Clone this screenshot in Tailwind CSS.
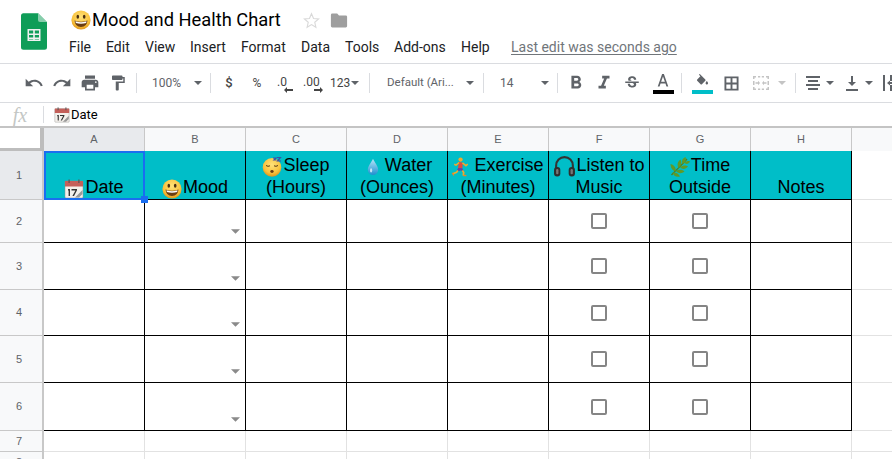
<!DOCTYPE html>
<html><head><meta charset="utf-8"><script src="https://cdn.jsdelivr.net/npm/@tailwindcss/browser@4"></script></head>
<body class="bg-white overflow-hidden">
<svg width="0" height="0" class="absolute">
<defs>
<radialGradient id="face" cx="50%" cy="35%" r="70%"><stop offset="0" stop-color="#ffe27a"/><stop offset="0.65" stop-color="#f9c23c"/><stop offset="1" stop-color="#d98a14"/></radialGradient>
<linearGradient id="drop" x1="0" y1="0" x2="0" y2="1"><stop offset="0" stop-color="#b8e6f8"/><stop offset="1" stop-color="#1f8fd0"/></linearGradient>
<symbol id="smile" viewBox="0 0 20 20"><circle cx="10" cy="10" r="9.6" fill="url(#face)"/><ellipse cx="6.8" cy="6.8" rx="1.3" ry="2" fill="#4a2f10"/><ellipse cx="13.2" cy="6.8" rx="1.3" ry="2" fill="#4a2f10"/><path d="M3.5 10.5Q10 13 16.5 10.5Q16 17 10 17Q4 17 3.5 10.5Z" fill="#6b3d12"/><path d="M4.5 11.2Q10 13.2 15.5 11.2L15.2 13Q10 14.6 4.8 13Z" fill="#fff"/></symbol>
<symbol id="cal" viewBox="0 0 20 20"><rect x="1" y="2" width="18" height="17" rx="1" fill="#f4f1ec" stroke="#8d8d8d" stroke-width=".5"/><rect x="1" y="2" width="18" height="5.5" fill="#c4605a"/><rect x="4.5" y="0.5" width="1.2" height="3.5" fill="#555"/><rect x="14.3" y="0.5" width="1.2" height="3.5" fill="#555"/><path d="M4 10h2v7H4.600v-5.400H4zM7.500 10H13v1.200L10 17H8.400l3-5.600H7.500z" fill="#333"/><path d="M11 18.500L18.500 11v4l-3.500 3.500z" fill="#9a9a9a"/></symbol>
<symbol id="sleep" viewBox="0 0 20 20"><circle cx="10" cy="10.400" r="9.300" fill="url(#face)"/><path d="M4 8.500q2 1.500 4 .3M12 8.800q2 1.200 4-.3" fill="none" stroke="#5a3a10" stroke-width="1"/><ellipse cx="10" cy="14.500" rx="1.700" ry="1.400" fill="#6b3d12"/><path d="M11 1h3l-2 2h2.500M15 .5h3.500l-3 3.500h3.500" fill="none" stroke="#3b4fa8" stroke-width="1.200"/></symbol>
<symbol id="water" viewBox="0 0 14 20"><path d="M7 .5C9 5 13 9 13 13.200A6 6 0 0 1 1 13.200C1 9 5 5 7 .5Z" fill="url(#drop)"/><ellipse cx="4.800" cy="14" rx="1.300" ry="2.500" fill="#e3f6fd" opacity=".8"/></symbol>
<symbol id="run" viewBox="0 0 20 22"><circle cx="9.500" cy="2.800" r="2.400" fill="#f0a92e"/><path d="M7.500 5.300L12 6.300 11.500 12.500 6.800 12.200Z" fill="#e0473f"/><path d="M11.600 6.500L15.500 9.500 17.500 7.800" fill="none" stroke="#f0a92e" stroke-width="1.700"/><path d="M8 6L4.500 9 2.500 8" fill="none" stroke="#f0a92e" stroke-width="1.700"/><path d="M6.800 12L11.600 12.500 12.500 15.500 9.500 15 8 15.500 5.500 15Z" fill="#6a3fa0"/><path d="M6.500 15L5 17 1 18.500" fill="none" stroke="#f0a92e" stroke-width="1.900"/><path d="M11.500 15L13 17 12.500 20.500" fill="none" stroke="#f0a92e" stroke-width="1.900"/><path d="M12.500 20.500h3.500" stroke="#e6862a" stroke-width="1.500"/><path d="M.5 17.500l1.500 3" stroke="#e6862a" stroke-width="1.500"/></symbol>
<symbol id="phones" viewBox="0 0 22 22"><path d="M3 13V10a8 8 0 0 1 16 0v3" fill="none" stroke="#333" stroke-width="2"/><rect x="1" y="11.500" width="6" height="9" rx="2.800" fill="#2f2f2f"/><rect x="15" y="11.500" width="6" height="9" rx="2.800" fill="#2f2f2f"/><rect x="3" y="13.500" width="2.200" height="5" rx="1" fill="#777"/><rect x="16.800" y="13.500" width="2.200" height="5" rx="1" fill="#777"/></symbol>
<symbol id="herb" viewBox="0 0 20 20"><path d="M1.500 18C6 13 11 9 17 2" fill="none" stroke="#4f7d1e" stroke-width="1.300"/><path d="M12.500 7C11 3.500 13 1 15.500 0 16.500 3 15.500 6 12.500 7ZM14.500 6C16.500 3.800 19 3.800 20 4.500 19 7 16.500 7.800 14.500 6ZM8.500 11C6.500 7.500 8 4 10.500 2.500 12 5.500 11.500 9 8.500 11ZM10 10.500C12.500 8 16.500 8 18 9.500 15.500 12.500 12.500 12.500 10 10.500ZM5.500 14.500C2 13.500.5 10 .5 7 4.500 8 6.500 11 5.500 14.500ZM6 14C8.500 12 13 12.500 14.500 14.500 11.500 17 8 16.500 6 14ZM2.500 15.500C6 15 8.500 16.500 10 19.500 6.500 20.500 3.500 19 2.500 15.500Z" fill="#5f9a28"/></symbol>
<symbol id="arrow" viewBox="0 0 10 5"><path d="M0 0h10L5 5z"/></symbol>
</defs></svg>

<div class="w-[892px] h-[459px] overflow-hidden flex flex-col font-['Roboto',sans-serif]">
  <!-- title bar -->
  <header class="h-[63px] flex shrink-0 relative">
    <div class="w-[70px] pl-[21px] pt-[13px] shrink-0">
      <svg width="26" height="37" viewBox="0 0 26 37"><path d="M2 0H17L26 9V34A2.500 2.500 0 0 1 23.500 36.500H2.500A2.500 2.500 0 0 1 0 34V2.500A2.500 2.500 0 0 1 2 0Z" fill="#0f9d58" transform="translate(0 .2)"/><path d="M17 0L26 9H19A2 2 0 0 1 17 7Z" fill="#87ceac"/><path d="M6.500 16H19.500V28H6.500ZM8 17.500V20.500H12.200V17.500ZM13.800 17.500V20.500H18V17.500ZM8 22V24.500H12.200V22ZM13.800 22V24.500H18V22ZM8 26V26.500H12.200V26ZM13.800 26V26.500H18V26Z" fill="#f1f1f1" fill-rule="evenodd"/></svg>
    </div>
    <div class="flex flex-col">
      <div class="flex items-center h-[24px] mt-[8px] text-[18.3px] text-black leading-none">
        <svg class="w-[20px] h-[20px] ml-[1px] mr-[1px]"><use href="#smile"/></svg>
        <span class="w-[190px] whitespace-nowrap">Mood and Health Chart</span>
        <svg class="ml-[21px] mt-[1px]" width="17" height="17" viewBox="0 0 24 24"><path d="M12 2.500l2.900 6.600 7.100.700-5.400 4.700 1.600 7-6.200-3.700-6.200 3.700 1.600-7L2 9.800l7.100-.700z" fill="none" stroke="#d9d9d9" stroke-width="1.600"/></svg>
        <svg class="ml-[10px] mt-[1px]" width="18" height="15" viewBox="0 0 18 15"><path d="M0 2A1.500 1.500 0 0 1 1.500 .5H7L9 2.500H16.500A1.500 1.500 0 0 1 18 4V13.500A1.500 1.500 0 0 1 16.500 15H1.500A1.500 1.500 0 0 1 0 13.500Z" fill="#9e9e9e" transform="scale(.9 .96) translate(1 0)"/></svg>
      </div>
      <nav class="flex items-center h-[24px] mt-[3px] text-[14px] text-[#202124] whitespace-nowrap">
        <span class="ml-[-1px] w-[37px]">File</span><span class="w-[39px]">Edit</span><span class="w-[45px]">View</span><span class="w-[51px]">Insert</span><span class="w-[60px]">Format</span><span class="w-[44px]">Data</span><span class="w-[49px]">Tools</span><span class="w-[67px]">Add-ons</span><span class="w-[50px]">Help</span>
        <span class="text-[#70757a] underline underline-offset-2">Last edit was seconds ago</span>
      </nav>
    </div>
  </header>

  <!-- toolbar -->
  <div class="h-[40px] shrink-0 border-y border-[#dadce0] flex items-center pl-[20px] text-[12px] text-[#5f6368] whitespace-nowrap overflow-hidden [&>*]:shrink-0">
    <span class="w-[28px] flex justify-center"><svg width="20" height="20" viewBox="0 0 24 24" fill="#5f6368"><path d="M12.500 8c-2.650 0-5.050.990-6.900 2.600L2 7v9h9l-3.620-3.620c1.390-1.160 3.160-1.880 5.120-1.880 3.540 0 6.550 2.310 7.600 5.500l2.370-.780C21.080 11.030 17.150 8 12.500 8z"/></svg></span>
    <span class="w-[28px] flex justify-center"><svg width="20" height="20" viewBox="0 0 24 24" fill="#5f6368"><path d="M18.400 10.600C16.550 8.990 14.150 8 11.500 8c-4.650 0-8.580 3.030-9.960 7.220L3.900 16c1.050-3.190 4.050-5.500 7.600-5.500 1.950 0 3.730.720 5.120 1.880L13 16h9V7l-3.600 3.600z"/></svg></span>
    <span class="w-[28px] flex justify-center"><svg width="20" height="20" viewBox="0 0 24 24" fill="#5f6368"><path d="M19 8H5c-1.660 0-3 1.340-3 3v6h4v4h12v-4h4v-6c0-1.660-1.340-3-3-3zm-3 11H8v-5h8v5zm3-7c-.550 0-1-.450-1-1s.450-1 1-1 1 .450 1 1-.450 1-1 1zm-1-9H6v4h12V3z"/></svg></span>
    <span class="w-[28px] flex justify-center"><svg width="18" height="18" viewBox="0 0 24 24" fill="#5f6368"><path d="M18 4V3c0-.550-.450-1-1-1H5c-.550 0-1 .450-1 1v4c0 .550.450 1 1 1h12c.550 0 1-.450 1-1V6h1v4H9v11c0 .550.450 1 1 1h2c.550 0 1-.450 1-1v-9h8V4h-3z"/></svg></span>
    <i class="block w-px h-[20px] bg-[#dadce0] ml-[4px]"></i>
    <span class="w-[73px] flex items-center"><span class="ml-[15px] w-[42px]">100%</span><svg class="w-[8px] h-[4px] fill-[#5f6368]"><use href="#arrow"/></svg></span>
    <i class="block w-px h-[20px] bg-[#dadce0]"></i>
    <span class="w-[28px] ml-[4px] text-center font-medium text-[13px] text-[#444] pb-[1px]">$</span>
    <span class="w-[28px] text-center text-[#444] pb-[1px]">%</span>
    <span class="w-[28px] relative pl-[6px] text-[#444] pb-[3px]">.0<svg class="absolute left-[13px] top-[14px]" width="9" height="6" viewBox="0 0 9 6" fill="#444"><path d="M3 0L0 3l3 3V4h6V2H3z"/></svg></span>
    <span class="w-[28px] relative pl-[4px] text-[#444] pb-[3px]">.00<svg class="absolute left-[15px] top-[14px]" width="9" height="6" viewBox="0 0 9 6" fill="#444"><path d="M6 0l3 3-3 3V4H0V2h6z"/></svg></span>
    <span class="w-[42px] flex items-center text-[#444]"><span class="ml-[3px]">123</span><svg class="ml-[1px] w-[8px] h-[4px] fill-[#5f6368]"><use href="#arrow"/></svg></span>
    <i class="block w-px h-[20px] bg-[#dadce0]"></i>
    <span class="w-[113px] flex items-center"><span class="ml-[17px] w-[79px] text-[11.500px]">Default (Ari...</span><svg class="w-[8px] h-[4px] fill-[#5f6368]"><use href="#arrow"/></svg></span>
    <i class="block w-px h-[20px] bg-[#dadce0]"></i>
    <span class="w-[73px] flex items-center"><span class="ml-[16px] w-[41px]">14</span><svg class="w-[8px] h-[4px] fill-[#5f6368]"><use href="#arrow"/></svg></span>
    <i class="block w-px h-[20px] bg-[#dadce0]"></i>
    <span class="w-[28px] ml-[4px] flex justify-center"><svg width="22" height="22" viewBox="0 0 24 24" fill="#5f6368"><path d="M15.600 10.790c.970-.670 1.650-1.770 1.650-2.790 0-2.260-1.750-4-4-4H7v14h7.040c2.090 0 3.710-1.700 3.710-3.790 0-1.520-.860-2.820-2.150-3.420zM10 6.500h3c.830 0 1.500.670 1.500 1.500s-.670 1.500-1.500 1.500h-3v-3zm3.500 9H10v-3h3.500c.830 0 1.500.670 1.500 1.500s-.670 1.500-1.500 1.500z"/></svg></span>
    <span class="w-[28px] flex justify-center"><svg width="22" height="22" viewBox="0 0 24 24" fill="#5f6368"><path d="M10 4v3h2.210l-3.420 8H6v3h8v-3h-2.210l3.420-8H18V4z"/></svg></span>
    <span class="w-[28px] flex justify-center"><svg width="18" height="18" viewBox="0 0 24 24" fill="#5f6368"><path d="M7.240 8.750c-.260-.480-.390-1.030-.390-1.670 0-.610.130-1.160.400-1.670.260-.500.630-.930 1.110-1.290.480-.350 1.050-.630 1.700-.830.660-.190 1.390-.290 2.180-.290.810 0 1.540.110 2.210.340.660.220 1.230.540 1.690.940.470.400.830.880 1.080 1.430.250.550.380 1.150.380 1.810h-3.010c0-.310-.050-.590-.150-.850-.090-.270-.240-.490-.440-.680-.200-.190-.450-.330-.750-.440-.300-.100-.660-.160-1.060-.160-.390 0-.740.040-1.030.130-.290.090-.530.210-.720.360-.190.160-.340.340-.440.550-.100.210-.150.430-.150.660 0 .480.250.880.740 1.210.380.250.770.480 1.410.700H7.390c-.050-.080-.110-.170-.150-.250zM21 12v-2H3v2h9.620c.180.070.400.140.550.200.370.170.660.340.870.510.210.170.350.360.430.570.070.200.110.430.110.690 0 .230-.050.450-.140.660-.090.200-.230.380-.420.530-.190.150-.420.260-.710.350-.290.080-.630.130-1.010.130-.430 0-.830-.040-1.180-.130s-.660-.230-.910-.420c-.250-.190-.450-.440-.590-.750-.140-.310-.250-.760-.250-1.210H6.400c0 .550.080 1.130.240 1.580.160.450.370.850.650 1.210.280.350.600.660.980.920.370.260.780.480 1.220.650.440.170.900.300 1.380.390.480.080.960.130 1.440.130.800 0 1.530-.090 2.180-.280s1.210-.450 1.670-.790c.460-.340.820-.770 1.070-1.270s.380-1.070.38-1.710c0-.600-.100-1.140-.310-1.610-.050-.110-.110-.230-.170-.330H21z"/></svg></span>
    <span class="w-[30px] flex flex-col items-center ml-[2px] pt-[1px]"><svg width="12" height="13" viewBox="0 0 16 15" fill="#5f6368" preserveAspectRatio="none"><path d="M6.800 0h2.400L15 14.500h-2.400l-1.300-3.500H4.700L3.400 14.500H1zM5.500 9h5L8 2.800z"/></svg><i class="block w-[21px] h-[4px] bg-black mt-[3px]"></i></span>
    <i class="block w-px h-[20px] bg-[#dadce0] ml-[3px]"></i>
    <span class="w-[28px] ml-[6px] flex flex-col items-center pt-[1px]"><svg width="15" height="13" viewBox="0 0 24 21" fill="#5f6368"><path d="M16.560 8.940L7.620 0 6.210 1.410l2.380 2.380-5.150 5.150c-.590.590-.590 1.540 0 2.120l5.500 5.500c.290.290.680.440 1.060.440s.770-.150 1.060-.440l5.500-5.500c.590-.580.590-1.530 0-2.120zM19 11.500s-2 2.170-2 3.500c0 1.100.900 2 2 2s2-.900 2-2c0-1.330-2-3.500-2-3.500z"/></svg><i class="block w-[21px] h-[4px] bg-[#00bec8] mt-[3px]"></i></span>
    <span class="w-[30px] flex justify-center"><svg width="15" height="15" viewBox="0 0 16 16" fill="none" stroke="#5f6368" stroke-width="2"><path d="M1.500 1.500h13v13h-13zM8 1.500v13M1.500 8h13"/></svg></span>
    <span class="w-[30px] flex justify-center"><svg width="16" height="14" viewBox="0 0 16 14" fill="#c4c4c4"><path d="M0 0h3v1.500H1.500V3H0zM5 0h2.200v1.500H5zM8.800 0H11v1.500H8.800zM13 0h3v3h-1.500V1.500H13zM0 11h1.500v1.500H3V14H0zM5 12.500h2.200V14H5zM8.800 12.500H11V14H8.800zM14.500 11H16v3h-3v-1.500h1.500zM0 5h1.500v4H0zM14.500 5H16v4h-1.500zM2.500 6.300h2.500V4.800L7 7 5 9.200V7.700H2.500zM13.500 6.300H11V4.800L9 7l2 2.200V7.700h2.500z"/></svg></span>
    <svg class="w-[8px] h-[4px] fill-[#c4c4c4] ml-[2px]"><use href="#arrow"/></svg>
    <i class="block w-px h-[20px] bg-[#dadce0] ml-[9px]"></i>
    <span class="w-[28px] ml-[3px] flex justify-center"><svg width="14" height="14" viewBox="0 0 14 14" fill="#5f6368"><path d="M0 0h14v2H0zM2 4h10v2H2zM0 8h14v2H0zM2 12h10v2H2z"/></svg></span>
    <svg class="w-[8px] h-[4px] fill-[#5f6368] -ml-[1px]"><use href="#arrow"/></svg>
    <span class="w-[28px] ml-[4px] flex justify-center"><svg width="14" height="15" viewBox="0 0 14 15" fill="#5f6368"><path d="M6 0h2v6h3l-4 4-4-4h3zM1 13h12v2H1z"/></svg></span>
    <svg class="w-[8px] h-[4px] fill-[#5f6368] -ml-[1px]"><use href="#arrow"/></svg>
    <span class="ml-[10px] flex"><svg width="14" height="16" viewBox="0 0 14 16" fill="#5f6368"><path d="M0 0h2v16H0zM7 0h2v6H7zM7 10h2v6H7zM4 8l3-2.500V7h7v2H7v1.500z"/></svg></span>
  </div>

  <!-- formula bar -->
  <div class="h-[23px] shrink-0 flex items-center">
    <span class="w-[43px] text-center font-['Liberation_Serif',serif] italic text-[20px] text-[#c4c7c5] leading-none pr-[3px]">fx</span>
    <i class="block w-px h-[17px] bg-[#dadce0]"></i>
    <svg class="w-[16px] h-[16px] ml-[10px]"><use href="#cal"/></svg>
    <span class="ml-[1px] text-[13px] text-black">Date</span>
  </div>

  <!-- sheet -->
  <div class="flex flex-col grow border-t-2 border-[#c4c4c4] text-[11px] text-[#5f6368] relative font-['Liberation_Sans',sans-serif]">
    <!-- column letters -->
    <div class="flex h-[23px] shrink-0">
      <div class="w-[44px] border-r-4 border-b-[3px] border-[#bdbdbd] bg-white"></div>
      <div class="w-[101px] bg-[#e8eaed] border-r border-[#c8c8c8] flex items-center justify-center">A</div>
      <div class="w-[101px] bg-[#f8f9fa] border-r border-[#c8c8c8] flex items-center justify-center">B</div>
      <div class="w-[101px] bg-[#f8f9fa] border-r border-[#c8c8c8] flex items-center justify-center">C</div>
      <div class="w-[101px] bg-[#f8f9fa] border-r border-[#c8c8c8] flex items-center justify-center">D</div>
      <div class="w-[101px] bg-[#f8f9fa] border-r border-[#c8c8c8] flex items-center justify-center">E</div>
      <div class="w-[101px] bg-[#f8f9fa] border-r border-[#c8c8c8] flex items-center justify-center">F</div>
      <div class="w-[101px] bg-[#f8f9fa] border-r border-[#c8c8c8] flex items-center justify-center">G</div>
      <div class="w-[101px] bg-[#f8f9fa] border-r border-[#c8c8c8] flex items-center justify-center">H</div>
      <div class="grow bg-[#f8f9fa]"></div>
    </div>
    <!-- row 1 -->
    <div class="flex h-[49px] shrink-0 text-[18px] leading-[22px] text-black">
      <div class="w-[44px] shrink-0 bg-[#e8eaed] border-r-2 border-b border-[#c8c8c8] flex items-center justify-center text-[11px] text-[#5f6368] pr-[4px]">1</div>
      <div class="w-[101px] shrink-0 bg-[#00bec8] border-r border-b border-black text-center flex flex-col justify-end pb-[1px]"><div class="whitespace-nowrap"><svg class="inline-block w-[20px] h-[20px] mb-[-2px] mr-[1px]"><use href="#cal"/></svg>Date</div></div>
      <div class="w-[101px] shrink-0 bg-[#00bec8] border-r border-b border-black text-center flex flex-col justify-end pb-[1px]"><div class="whitespace-nowrap"><svg class="inline-block w-[20px] h-[20px] mb-[-2px] mr-[1px]"><use href="#smile"/></svg>Mood</div></div>
      <div class="w-[101px] shrink-0 bg-[#00bec8] border-r border-b border-black text-center flex flex-col justify-end pb-[1px]"><div class="whitespace-nowrap"><svg class="inline-block w-[20px] h-[20px] mb-[-2px] mr-[1px]"><use href="#sleep"/></svg>Sleep</div><div>(Hours)</div></div>
      <div class="w-[101px] shrink-0 bg-[#00bec8] border-r border-b border-black text-center flex flex-col justify-end pb-[1px]"><div class="whitespace-nowrap"><svg class="inline-block w-[12px] h-[18px] mb-[-1px] ml-[5px] mr-[6px]"><use href="#water"/></svg>Water</div><div>(Ounces)</div></div>
      <div class="w-[101px] shrink-0 bg-[#00bec8] border-r border-b border-black text-center flex flex-col justify-end pb-[1px]"><div class="whitespace-nowrap"><svg class="inline-block w-[18px] h-[20px] mb-[-1px] mr-[4px]"><use href="#run"/></svg>Exercise</div><div>(Minutes)</div></div>
      <div class="w-[101px] shrink-0 bg-[#00bec8] border-r border-b border-black text-center flex flex-col justify-end pb-[1px]"><div class="whitespace-nowrap"><svg class="inline-block w-[23px] h-[23px] mb-[-7px] -translate-y-[3px]"><use href="#phones"/></svg>Listen to</div><div>Music</div></div>
      <div class="w-[101px] shrink-0 bg-[#00bec8] border-r border-b border-black text-center flex flex-col justify-end pb-[1px]"><div class="whitespace-nowrap"><svg class="inline-block w-[20px] h-[20px] mb-[-2px] mr-[1px]"><use href="#herb"/></svg>Time</div><div>Outside</div></div>
      <div class="w-[101px] shrink-0 bg-[#00bec8] border-r border-b border-black text-center flex flex-col justify-end pb-[1px]"><div>Notes</div></div>
      <div class="grow border-b border-[#e2e2e2]"></div>
    </div>
    <!-- row 2 -->
    <div class="flex h-[43px] shrink-0">
      <div class="w-[44px] shrink-0 bg-[#f8f9fa] border-r-2 border-b border-[#c8c8c8] flex items-center justify-center pr-[4px]">2</div>
      <div class="w-[101px] shrink-0 border-r border-b border-black"></div>
      <div class="w-[101px] shrink-0 border-r border-b border-black flex items-end justify-end pr-[5px] pb-[8px]"><svg class="w-[9px] h-[5px] fill-[#8a8a8a]"><use href="#arrow"/></svg></div>
      <div class="w-[101px] shrink-0 border-r border-b border-black"></div>
      <div class="w-[101px] shrink-0 border-r border-b border-black"></div>
      <div class="w-[101px] shrink-0 border-r border-b border-black"></div>
      <div class="w-[101px] shrink-0 border-r border-b border-black flex items-center justify-center"><i class="block size-[16px] border-2 border-[#858585] rounded-[2px]"></i></div>
      <div class="w-[101px] shrink-0 border-r border-b border-black flex items-center justify-center"><i class="block size-[16px] border-2 border-[#858585] rounded-[2px]"></i></div>
      <div class="w-[101px] shrink-0 border-r border-b border-black"></div>
      <div class="grow border-b border-[#e2e2e2]"></div>
    </div>
    <!-- row 3 -->
    <div class="flex h-[47px] shrink-0">
      <div class="w-[44px] shrink-0 bg-[#f8f9fa] border-r-2 border-b border-[#c8c8c8] flex items-center justify-center pr-[4px]">3</div>
      <div class="w-[101px] shrink-0 border-r border-b border-black"></div>
      <div class="w-[101px] shrink-0 border-r border-b border-black flex items-end justify-end pr-[5px] pb-[8px]"><svg class="w-[9px] h-[5px] fill-[#8a8a8a]"><use href="#arrow"/></svg></div>
      <div class="w-[101px] shrink-0 border-r border-b border-black"></div>
      <div class="w-[101px] shrink-0 border-r border-b border-black"></div>
      <div class="w-[101px] shrink-0 border-r border-b border-black"></div>
      <div class="w-[101px] shrink-0 border-r border-b border-black flex items-center justify-center"><i class="block size-[16px] border-2 border-[#858585] rounded-[2px]"></i></div>
      <div class="w-[101px] shrink-0 border-r border-b border-black flex items-center justify-center"><i class="block size-[16px] border-2 border-[#858585] rounded-[2px]"></i></div>
      <div class="w-[101px] shrink-0 border-r border-b border-black"></div>
      <div class="grow border-b border-[#e2e2e2]"></div>
    </div>
    <!-- row 4 -->
    <div class="flex h-[46px] shrink-0">
      <div class="w-[44px] shrink-0 bg-[#f8f9fa] border-r-2 border-b border-[#c8c8c8] flex items-center justify-center pr-[4px]">4</div>
      <div class="w-[101px] shrink-0 border-r border-b border-black"></div>
      <div class="w-[101px] shrink-0 border-r border-b border-black flex items-end justify-end pr-[5px] pb-[8px]"><svg class="w-[9px] h-[5px] fill-[#8a8a8a]"><use href="#arrow"/></svg></div>
      <div class="w-[101px] shrink-0 border-r border-b border-black"></div>
      <div class="w-[101px] shrink-0 border-r border-b border-black"></div>
      <div class="w-[101px] shrink-0 border-r border-b border-black"></div>
      <div class="w-[101px] shrink-0 border-r border-b border-black flex items-center justify-center"><i class="block size-[16px] border-2 border-[#858585] rounded-[2px]"></i></div>
      <div class="w-[101px] shrink-0 border-r border-b border-black flex items-center justify-center"><i class="block size-[16px] border-2 border-[#858585] rounded-[2px]"></i></div>
      <div class="w-[101px] shrink-0 border-r border-b border-black"></div>
      <div class="grow border-b border-[#e2e2e2]"></div>
    </div>
    <!-- row 5 -->
    <div class="flex h-[47px] shrink-0">
      <div class="w-[44px] shrink-0 bg-[#f8f9fa] border-r-2 border-b border-[#c8c8c8] flex items-center justify-center pr-[4px]">5</div>
      <div class="w-[101px] shrink-0 border-r border-b border-black"></div>
      <div class="w-[101px] shrink-0 border-r border-b border-black flex items-end justify-end pr-[5px] pb-[8px]"><svg class="w-[9px] h-[5px] fill-[#8a8a8a]"><use href="#arrow"/></svg></div>
      <div class="w-[101px] shrink-0 border-r border-b border-black"></div>
      <div class="w-[101px] shrink-0 border-r border-b border-black"></div>
      <div class="w-[101px] shrink-0 border-r border-b border-black"></div>
      <div class="w-[101px] shrink-0 border-r border-b border-black flex items-center justify-center"><i class="block size-[16px] border-2 border-[#858585] rounded-[2px]"></i></div>
      <div class="w-[101px] shrink-0 border-r border-b border-black flex items-center justify-center"><i class="block size-[16px] border-2 border-[#858585] rounded-[2px]"></i></div>
      <div class="w-[101px] shrink-0 border-r border-b border-black"></div>
      <div class="grow border-b border-[#e2e2e2]"></div>
    </div>
    <!-- row 6 -->
    <div class="flex h-[48px] shrink-0">
      <div class="w-[44px] shrink-0 bg-[#f8f9fa] border-r-2 border-b border-[#c8c8c8] flex items-center justify-center pr-[4px]">6</div>
      <div class="w-[101px] shrink-0 border-r border-b border-black"></div>
      <div class="w-[101px] shrink-0 border-r border-b border-black flex items-end justify-end pr-[5px] pb-[8px]"><svg class="w-[9px] h-[5px] fill-[#8a8a8a]"><use href="#arrow"/></svg></div>
      <div class="w-[101px] shrink-0 border-r border-b border-black"></div>
      <div class="w-[101px] shrink-0 border-r border-b border-black"></div>
      <div class="w-[101px] shrink-0 border-r border-b border-black"></div>
      <div class="w-[101px] shrink-0 border-r border-b border-black flex items-center justify-center"><i class="block size-[16px] border-2 border-[#858585] rounded-[2px]"></i></div>
      <div class="w-[101px] shrink-0 border-r border-b border-black flex items-center justify-center"><i class="block size-[16px] border-2 border-[#858585] rounded-[2px]"></i></div>
      <div class="w-[101px] shrink-0 border-r border-b border-black"></div>
      <div class="grow border-b border-[#e2e2e2]"></div>
    </div>
    <!-- row 7 -->
    <div class="flex h-[21px] shrink-0">
      <div class="w-[44px] shrink-0 bg-[#f8f9fa] border-r-2 border-b border-[#c8c8c8] flex items-center justify-center pr-[4px]">7</div>
      <div class="w-[101px] shrink-0 border-r border-b border-[#e2e2e2]"></div>
      <div class="w-[101px] shrink-0 border-r border-b border-[#e2e2e2]"></div>
      <div class="w-[101px] shrink-0 border-r border-b border-[#e2e2e2]"></div>
      <div class="w-[101px] shrink-0 border-r border-b border-[#e2e2e2]"></div>
      <div class="w-[101px] shrink-0 border-r border-b border-[#e2e2e2]"></div>
      <div class="w-[101px] shrink-0 border-r border-b border-[#e2e2e2]"></div>
      <div class="w-[101px] shrink-0 border-r border-b border-[#e2e2e2]"></div>
      <div class="w-[101px] shrink-0 border-r border-b border-[#e2e2e2]"></div>
      <div class="grow border-b border-[#e2e2e2]"></div>
    </div>
    <!-- row 8 -->
    <div class="flex h-[21px] shrink-0">
      <div class="w-[44px] shrink-0 bg-[#f8f9fa] border-r-2 border-[#c8c8c8] flex items-center justify-center pr-[4px]">8</div>
      <div class="w-[101px] shrink-0 border-r border-[#e2e2e2]"></div>
      <div class="w-[101px] shrink-0 border-r border-[#e2e2e2]"></div>
      <div class="w-[101px] shrink-0 border-r border-[#e2e2e2]"></div>
      <div class="w-[101px] shrink-0 border-r border-[#e2e2e2]"></div>
      <div class="w-[101px] shrink-0 border-r border-[#e2e2e2]"></div>
      <div class="w-[101px] shrink-0 border-r border-[#e2e2e2]"></div>
      <div class="w-[101px] shrink-0 border-r border-[#e2e2e2]"></div>
      <div class="w-[101px] shrink-0 border-r border-[#e2e2e2]"></div>
    </div>
    <!-- selection -->
    <div class="absolute left-[44px] top-[23px] w-[101px] h-[49px] border-2 border-[#1a6ef0]"></div>
    <div class="absolute left-[141px] top-[68px] size-[7px] bg-[#1a6ef0]"></div>
  </div>
</div>
</body></html>
